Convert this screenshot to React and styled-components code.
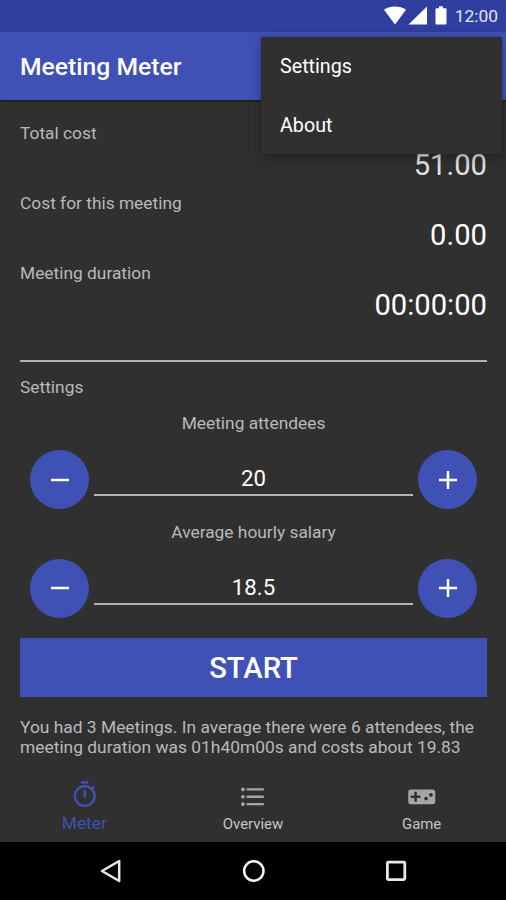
import React from 'react';
import styled, { createGlobalStyle } from 'styled-components';
import { MdFormatListBulleted, MdOutlineTimer, MdVideogameAsset } from 'react-icons/md';

const metrics = [
  { label: 'Total cost', value: '51.00', dimmed: true },
  { label: 'Cost for this meeting', value: '0.00' },
  { label: 'Meeting duration', value: '00:00:00' },
];

const steppers = [
  { label: 'Meeting attendees', value: '20' },
  { label: 'Average hourly salary', value: '18.5' },
];

const tabs = [
  { label: 'Meter', icon: MdOutlineTimer, active: true },
  { label: 'Overview', icon: MdFormatListBulleted },
  { label: 'Game', icon: MdVideogameAsset },
];

const StatusIcons = () => (
  <svg width="66" height="20" viewBox="0 0 66 20" fill="#fff">
    <path d="M0 3.700C3 1.500 7 .5 11 .5s8 1 11 3.200L11 18.500z" />
    <path d="M43 .5v18H24.500z" />
    <path d="M55 .2h4v2h2.500q1 0 1 1v14.300q0 1-1 1h-9q-1 0-1-1V3.200q0-1 1-1H55z" />
  </svg>
);

const Stepper = ({ label, value }) => (
  <StepperGroup>
    <StepperLabel>{label}</StepperLabel>
    <StepperRow>
      <RoundButton type="button" aria-label={`Decrease ${label}`}>
        <svg width="20" height="20" viewBox="0 0 20 20" stroke="#fff" strokeWidth="2.500">
          <path d="M1 10h18" />
        </svg>
      </RoundButton>
      <Field>{value}</Field>
      <RoundButton type="button" aria-label={`Increase ${label}`}>
        <svg width="20" height="20" viewBox="0 0 20 20" stroke="#fff" strokeWidth="2.500">
          <path d="M1 10h18M10 1v18" />
        </svg>
      </RoundButton>
    </StepperRow>
  </StepperGroup>
);

const App = () => {
  return (
    <Screen>
      <GlobalStyle />
      <StatusBar>
        <StatusIcons />
        <Clock>12:00</Clock>
      </StatusBar>
      <Toolbar>
        <Title>Meeting Meter</Title>
      </Toolbar>
      <Menu>
        <MenuItem>Settings</MenuItem>
        <MenuItem>About</MenuItem>
      </Menu>

      <Content>
        {metrics.map((m) => (
          <Metric key={m.label}>
            <Label>{m.label}</Label>
            <Value $dimmed={m.dimmed}>{m.value}</Value>
          </Metric>
        ))}
        <Divider />
        <Label>Settings</Label>
        <Steppers>
          {steppers.map((s) => (
            <Stepper key={s.label} {...s} />
          ))}
        </Steppers>
        <StartButton type="button">START</StartButton>
        <Summary>
          You had 3 Meetings. In average there were 6 attendees, the meeting duration was
          01h40m00s and costs about 19.83
        </Summary>
      </Content>

      <TabBar>
        {tabs.map(({ label, icon: Icon, active }) => (
          <Tab key={label} $active={active}>
            <Icon size={29.5} />
            <TabLabel $active={active}>{label}</TabLabel>
          </Tab>
        ))}
      </TabBar>

      <NavBar>
        <svg width="22" height="24" viewBox="0 0 22 24" fill="none" stroke="#e8e8e8" strokeWidth="2.500" strokeLinejoin="round">
          <path d="M20.200 2v20L3 12z" />
        </svg>
        <svg width="24" height="24" viewBox="0 0 24 24" fill="none" stroke="#f4f4f4" strokeWidth="2.500">
          <circle cx="12.800" cy="12" r="9.700" />
        </svg>
        <svg width="22" height="24" viewBox="0 0 22 24" fill="none" stroke="#e8e8e8" strokeWidth="2.800">
          <rect x="2.400" y="3.200" width="17.400" height="17.400" rx="1" />
        </svg>
      </NavBar>
    </Screen>
  );
};

const GlobalStyle = createGlobalStyle`
  * {
    box-sizing: border-box;
  }

  body {
    margin: 0;
    background: #303030;
  }
`;

const Screen = styled.div`
  position: relative;
  display: flex;
  flex-direction: column;
  width: 506px;
  height: 900px;
  overflow: hidden;
  background: #303030;
  color: #fff;
  font-family: Roboto, sans-serif;
`;

const StatusBar = styled.div`
  display: flex;
  align-items: center;
  justify-content: flex-end;
  gap: 5px;
  height: 32px;
  padding: 0 8px 1px 0;
  background: #303f9f;
`;

const Clock = styled.span`
  color: #e2e5f5;
  font-size: 17.4px;
  line-height: 20px;
`;

const Toolbar = styled.header`
  display: flex;
  align-items: center;
  height: 68px;
  padding: 1px 20px 0;
  background: #3f51b5;
  box-shadow: 0 1px 2px rgba(0, 0, 0, 0.6);
`;

const Title = styled.h1`
  margin: 0;
  font-size: 24.7px;
  font-weight: 500;
`;

/* overflow menu, opens over the toolbar */
const Menu = styled.div`
  position: absolute;
  top: 37px;
  right: 4px;
  width: 241px;
  background: #303030;
  box-shadow: 0 5px 12px rgba(0, 0, 0, 0.25), 0 0 3px rgba(0, 0, 0, 0.2);
`;

const MenuItem = styled.div`
  height: 58.5px;
  padding-left: 19px;
  font-size: 19.7px;
  line-height: 60px;
`;

const Content = styled.main`
  display: flex;
  flex: 1;
  flex-direction: column;
  padding: 23px 19px 0 20px;
`;

const Metric = styled.div`
  height: 70px;
`;

const Label = styled.div`
  color: #b9b9b9;
  font-size: 17.35px;
  line-height: 20px;
`;

const Value = styled.div`
  color: ${(props) => (props.$dimmed ? '#e2e2e2' : '#fff')};
  font-size: 29.2px;
  line-height: 45px;
  text-align: right;
`;

const Divider = styled.hr`
  width: 100%;
  height: 2px;
  margin: 27px 0 15px;
  border: 0;
  background: #b0b0b0;
`;

const Steppers = styled.div`
  display: flex;
  flex-direction: column;
  gap: 12.5px;
  padding: 16px 10px 0;
`;

const StepperGroup = styled.div`
  display: flex;
  flex-direction: column;
  gap: 17px;
`;

const StepperLabel = styled(Label)`
  text-align: center;
`;

const StepperRow = styled.div`
  display: flex;
  gap: 5px;
`;

const RoundButton = styled.button`
  display: flex;
  align-items: center;
  justify-content: center;
  width: 59px;
  height: 59px;
  padding: 0;
  border: 0;
  border-radius: 50%;
  background: #3f51b5;
`;

const Field = styled.div`
  flex: 1;
  height: 46px;
  border-bottom: 2px solid #b4b4b4;
  font-size: 22.2px;
  line-height: 57px;
  text-align: center;
`;

const StartButton = styled.button`
  height: 59px;
  margin-top: 20px;
  padding: 1px 0 0;
  border: 0;
  background: #3f51b5;
  color: #fff;
  font-family: inherit;
  font-size: 29.2px;
  font-weight: 500;
`;

const Summary = styled.p`
  margin: 20.5px 0 0;
  color: #b9b9b9;
  font-size: 17.4px;
  line-height: 20px;
`;

const TabBar = styled.nav`
  display: grid;
  grid-template-columns: repeat(3, 1fr);
  height: 62px;
`;

const Tab = styled.div`
  display: flex;
  flex-direction: column;
  align-items: center;
  padding-top: ${(props) => (props.$active ? '0' : '2px')};
  color: ${(props) => (props.$active ? '#3f51b5' : '#a6a6a6')};
`;

const TabLabel = styled.span`
  margin-top: ${(props) => (props.$active ? '3px' : '2px')};
  color: ${(props) => (props.$active ? '#3f51b5' : '#c6c6c6')};
  font-size: ${(props) => (props.$active ? '17.4px' : '14.9px')};
  line-height: 20px;
`;

const NavBar = styled.footer`
  display: flex;
  align-items: center;
  justify-content: center;
  gap: 120px;
  height: 58px;
  background: #000;
`;

export default App;
